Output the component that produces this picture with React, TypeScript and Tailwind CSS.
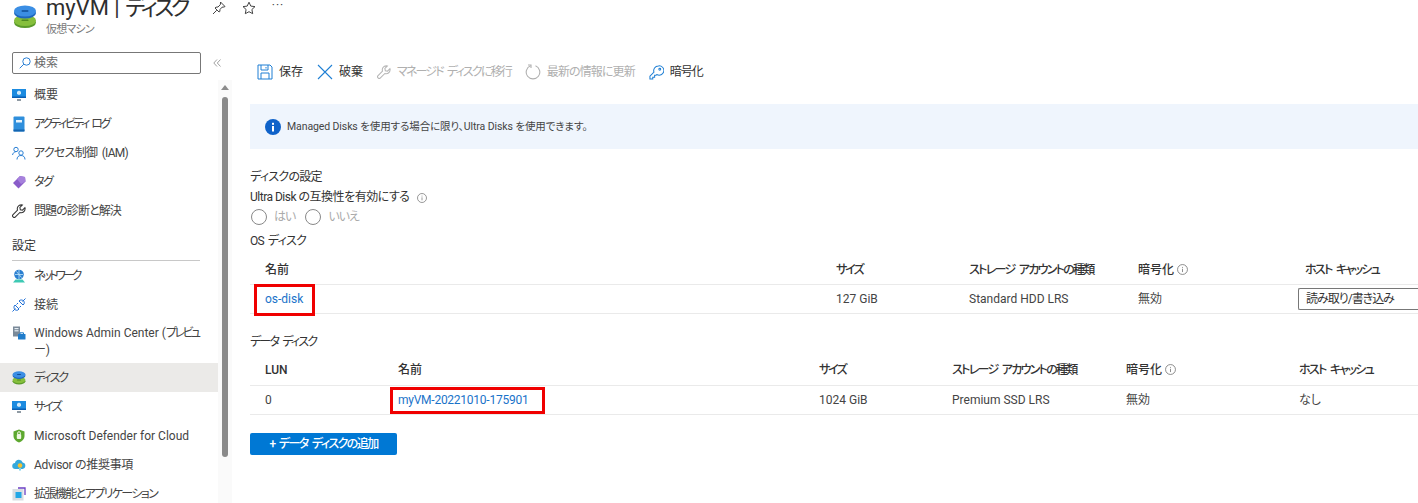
import React from "react";

const font = { fontFamily: 'Roboto,"Noto Sans CJK JP",sans-serif' };

const Monitor = () => (
  <svg width="14" height="14" viewBox="0 0 14 14">
    <rect x="0" y="1" width="14" height="9" fill="#1c8be0" />
    <rect x="0" y="8.500" width="14" height="1.500" fill="#0a5fb4" />
    <path d="M7 2.500l2 1.200v2.200L7 7 5 5.900V3.700z" fill="#cfeafc" />
    <rect x="5" y="11" width="4" height="2" fill="#8f9aa3" />
  </svg>
);
const Book = () => (
  <svg width="14" height="16" viewBox="0 0 14 16">
    <rect x="1.500" y="0.500" width="11" height="15" rx="1" fill="#2f8fdc" />
    <rect x="1.500" y="13.500" width="11" height="2" fill="#1465b0" />
    <rect x="4" y="4" width="6" height="2.500" fill="#e8f4fc" />
  </svg>
);
const People = () => (
  <svg width="14" height="14" viewBox="0 0 14 14" fill="none" stroke="#2a7fd4" strokeWidth="1">
    <circle cx="4" cy="3.500" r="2.200" />
    <path d="M0.500 9c.5-2 1.500-3 3-3" />
    <circle cx="9" cy="7" r="2.200" />
    <path d="M5 13.500c0-2.500 1.500-4 4-4s4 1.500 4 4" />
  </svg>
);
const Tag = () => (
  <svg width="14" height="14" viewBox="0 0 14 14">
    <path d="M8 1l5 1 .5 4.500L6.500 13.500 1 8z" fill="#8a5cc9" />
    <path d="M8 1l5 1 .5 4.500L9 9 5 4z" fill="#a681dc" />
  </svg>
);
const Wrench = ({ color = "#333", size = 14 }: { color?: string; size?: number }) => (
  <svg width={size} height={size} viewBox="0 0 16 16" fill="none" stroke={color} strokeWidth="1.200">
    <path d="M10.500 1a4.500 4.500 0 0 0-4.200 6L1.200 12.100a1.900 1.900 0 0 0 2.700 2.700L9 9.700A4.500 4.500 0 0 0 15 5.500c0-.5 0-.9-.2-1.300L12 7 9.500 6.500 9 4l2.800-2.800c-.4-.1-.9-.2-1.300-.2z" />
  </svg>
);
const Globe = () => (
  <svg width="14" height="14" viewBox="0 0 14 14">
    <circle cx="7" cy="5.500" r="4.800" fill="#2b7fd0" />
    <path d="M3 5.500h8M7 1v9M4.500 2.500c2 2 3 4 5 6" stroke="#bfe3f8" strokeWidth="0.800" fill="none" />
    <path d="M1 13.500l2.500-3h7l2.500 3z" fill="#3ec9b4" />
  </svg>
);
const Plug = () => (
  <svg width="14" height="14" viewBox="0 0 14 14" fill="none" stroke="#1f6fd6" strokeWidth="1">
    <path d="M0.500 13.500l3-3M10.500 3.500l3-3" />
    <path d="M3 7l4 4-1 1c-1 .5-2.500.3-3.200-.6C2 10.500 1.700 9 2.300 8zM7 3l4 4 1-1c.5-1 .3-2.500-.6-3.200C10.500 2 9 1.700 8 2.300z" />
    <path d="M4.500 6.500l1.500-1.500M7.500 9.500L9 8" />
  </svg>
);
const Admin = () => (
  <svg width="14" height="14" viewBox="0 0 14 14">
    <rect x="1" y="0.500" width="7" height="10" fill="#7b8a99" />
    <rect x="2.500" y="2" width="4" height="1.200" fill="#e6edf3" />
    <rect x="2.500" y="4.200" width="4" height="1.200" fill="#e6edf3" />
    <rect x="6" y="8" width="7.500" height="5.500" rx="0.500" fill="#1f7ccb" />
    <path d="M8 8V6.800h3.500V8" stroke="#1f7ccb" fill="none" />
  </svg>
);
const Disks = ({ size = 14 }: { size?: number }) => (
  <svg width={size} height={size} viewBox="0 0 24 24">
    <ellipse cx="12" cy="17.500" rx="11" ry="5.500" fill="#5a9a2a" />
    <ellipse cx="12" cy="15.500" rx="11" ry="5.500" fill="#86bf3c" />
    <rect x="8.500" y="14.600" width="7" height="1.500" rx="0.700" fill="#4e8a22" />
    <ellipse cx="12" cy="8" rx="11" ry="5.500" fill="#1d66bd" />
    <ellipse cx="12" cy="6" rx="11" ry="5.500" fill="#3b8ee4" />
    <rect x="8.500" y="5.300" width="7" height="1.500" rx="0.700" fill="#0f4e96" />
  </svg>
);
const Shield = () => (
  <svg width="14" height="14" viewBox="0 0 14 14">
    <path d="M7 0.500l5.500 2v4.500c0 3-2.500 5.500-5.500 6.500-3-1-5.500-3.500-5.500-6.500V2.500z" fill="#5da82f" />
    <rect x="4.800" y="5" width="4.400" height="5" rx="1" fill="#eef7e2" />
    <path d="M5.700 5V4a1.300 1.300 0 0 1 2.600 0v1" stroke="#eef7e2" fill="none" />
  </svg>
);
const Cloud = () => (
  <svg width="14" height="14" viewBox="0 0 14 14">
    <path d="M3.500 11a3 3 0 0 1-.5-6 4 4 0 0 1 7.700-.5A3.300 3.300 0 0 1 10.500 11z" fill="#35a9dc" />
    <circle cx="8" cy="7.500" r="2.300" fill="#f6c22f" />
    <rect x="7" y="10" width="2" height="2.500" fill="#7fd3ee" />
  </svg>
);
const Ext = () => (
  <svg width="14" height="14" viewBox="0 0 14 14">
    <rect x="0.500" y="2" width="11" height="11.500" fill="#d8dde2" />
    <rect x="3.500" y="5" width="6" height="6" fill="#22a7e6" />
    <path d="M6 1h7v7" stroke="#6b3fc4" strokeWidth="1.300" fill="none" />
  </svg>
);

const Info = ({ size = 11 }: { size?: number }) => (
  <svg width={size} height={size} viewBox="0 0 12 12" fill="none" stroke="#666" strokeWidth="0.800">
    <circle cx="6" cy="6" r="5.400" />
    <path d="M6 5.200v3.600M6 3.200v1" />
  </svg>
);

function NavItem({ icon, label, active, tc = "" }: { icon: React.ReactNode; label: string; active?: boolean; tc?: string }) {
  return (
    <div className={`flex h-[29px] items-center pl-3 ${active ? "bg-[#ebeae8]" : ""}`}>
      <span className="mr-2 flex w-[14px] justify-center">{icon}</span>
      <span className={`text-[12px] text-[#444] ${tc}`}>{label}</span>
    </div>
  );
}

function Tool({ icon, label, off, tc = "" }: { icon: React.ReactNode; label: string; off?: boolean; tc?: string }) {
  return (
    <div className="flex items-center gap-[6px]">
      {icon}
      <span className={`text-[12px] ${tc} ${off ? "text-[#b0b0b0]" : "text-[#333]"}`}>{label}</span>
    </div>
  );
}

function Marked({ children, cls }: { children: React.ReactNode; cls: string }) {
  return (
    <span className="relative inline-block">
      <span className={`absolute border-[3px] border-[#f00000] ${cls}`} />
      {children}
    </span>
  );
}

export default function App() {
  return (
    <div className="h-[503px] w-[1418px] overflow-hidden bg-white text-[#333] [font-feature-settings:'palt']" style={font}>
      {/* header */}
      <div className="flex h-[44px] items-start pl-[13px]">
        <div className="mt-[5px] mr-[9px]">
          <Disks size={24} />
        </div>
        <div>
          <div className="mt-[-8px] flex items-center">
            <span className="text-[22px] leading-[32px] text-[#2e2e2e]">
              myVM | <span className="tracking-[-3.500px]">ディスク</span>
            </span>
            <svg className="ml-[25px]" width="14" height="14" viewBox="0 0 14 14" fill="none" stroke="#444" strokeWidth="1">
              <path d="M8.500 1l4.500 4.500-1 .5-2 .2-2 2.300-.2 2L7 11 3 7l1-.8 2-.2L8.300 3.700l.2-1.700zM4.800 9.200L1 13" />
            </svg>
            <svg className="ml-[16px]" width="14" height="14" viewBox="0 0 14 14" fill="none" stroke="#444" strokeWidth="1">
              <path d="M7 1.200l1.800 3.900 4.200.5-3.100 2.900.8 4.200L7 10.700l-3.700 2 .8-4.200L1 5.600l4.200-.5z" />
            </svg>
            <span className="mb-[7px] ml-[16px] text-[12px] tracking-[1px] text-[#444]">···</span>
          </div>
          <div className="mt-[-1px] text-[11px] leading-[14px] tracking-[-0.800px] text-[#777]">仮想マシン</div>
        </div>
      </div>

      <div className="flex h-[459px]">
        {/* sidebar */}
        <div className="relative h-full w-[232px] shrink-0 overflow-hidden">
          <div className="flex items-center pt-[8px] pl-3">
            <div className="flex h-[22px] w-[189px] items-center rounded-[2px] border border-[#777] pl-[6px]">
              <svg width="12" height="12" viewBox="0 0 12 12" fill="none" stroke="#2a7fd4" strokeWidth="1">
                <circle cx="7.500" cy="4.500" r="3.700" />
                <path d="M4.800 7.200L.7 11.300" />
              </svg>
              <span className="ml-[3px] text-[12px] text-[#666]">検索</span>
            </div>
            <svg className="ml-[12px]" width="8" height="8" viewBox="0 0 8 8" fill="none" stroke="#888" strokeWidth="0.800">
              <path d="M4 .5L.8 4 4 7.500M7.500 .5L4.300 4l3.200 3.500" />
            </svg>
          </div>
          <div className="w-[218px] pt-[6px]">
            <NavItem icon={<Monitor />} label="概要" />
            <NavItem icon={<Book />} label="アクティビティ ログ" tc="tracking-[-2.500px] [word-spacing:3px]" />
            <NavItem icon={<People />} label="アクセス制御 (IAM)" tc="tracking-[-0.700px] [word-spacing:2px]" />
            <NavItem icon={<Tag />} label="タグ" tc="tracking-[-1.500px]" />
            <NavItem icon={<Wrench />} label="問題の診断と解決" tc="tracking-[-0.900px]" />
            <div className="mt-[12px] pl-3 text-[12px] leading-[18px] text-[#333]">設定</div>
            <div className="mt-[5px] ml-3 w-[188px] border-t border-[#c8c8c8]" />
            <NavItem icon={<Globe />} label="ネットワーク" tc="tracking-[-3px]" />
            <NavItem icon={<Plug />} label="接続" />
            <div className="flex h-[44px] items-start pt-[6px] pl-3">
              <span className="mt-[1px] mr-2 flex w-[14px] justify-center"><Admin /></span>
              <span className="text-[12px] leading-[17px] text-[#444]">
                Windows Admin Center (<span className="tracking-[-2.500px]">プレビュ</span>
                <br />
                ー)
              </span>
            </div>
            <NavItem active icon={<Disks />} label="ディスク" tc="tracking-[-2px]" />
            <NavItem icon={<Monitor />} label="サイズ" tc="tracking-[-2px]" />
            <NavItem icon={<Shield />} label="Microsoft Defender for Cloud" />
            <NavItem icon={<Cloud />} label="Advisor の推奨事項" tc="tracking-[-0.300px]" />
            <NavItem icon={<Ext />} label="拡張機能とアプリケーション" tc="tracking-[-1.600px]" />
          </div>
          {/* scrollbar */}
          <div className="absolute top-[36px] left-[218px] h-[423px] w-[14px] bg-[#fafafa]">
            <div className="mx-auto mt-[5px] h-0 w-0 border-x-[4px] border-b-[5px] border-x-transparent border-b-[#8a8a8a]" />
            <div className="mx-auto mt-[7px] h-[360px] w-[6px] rounded-[3px] bg-[#8a8a8a]" />
          </div>
        </div>

        {/* main */}
        <div className="min-w-0 flex-1 pl-[18px]">
          <div className="flex h-[60px] items-start gap-[14px] pt-[19px] pl-[7px]">
            <Tool
              label="保存"
              icon={
                <svg width="16" height="16" viewBox="0 0 16 16" fill="none" stroke="#1f7fd4" strokeWidth="1">
                  <path d="M1 1h12l2 2v12H1z" />
                  <path d="M4 1v5h7V1M4 15v-6h8v6M9 3v1.500" />
                </svg>
              }
            />
            <Tool
              label="破棄"
              icon={
                <svg width="16" height="16" viewBox="0 0 16 16" fill="none" stroke="#1f7fd4" strokeWidth="1.100">
                  <path d="M1 1l14 14M15 1L1 15" />
                </svg>
              }
            />
            <Tool off label="マネージド ディスクに移行" tc="tracking-[-1.850px] [word-spacing:3px]" icon={<Wrench color="#b5b5b5" />} />
            <Tool
              off
              label="最新の情報に更新"
              tc="tracking-[-0.900px]"
              icon={
                <svg width="16" height="16" viewBox="0 0 16 16" fill="none" stroke="#b0b0b0" strokeWidth="1.100">
                  <path d="M5.500 1.800A6.800 6.800 0 1 0 10.500 1.800" />
                  <path d="M3 1h3v3" />
                </svg>
              }
            />
            <Tool
              label="暗号化"
              tc="tracking-[-1px]"
              icon={
                <svg width="15" height="15" viewBox="0 0 16 16" fill="none" stroke="#1f7fd4" strokeWidth="1.100">
                  <path d="M10 1a5 5 0 0 0-4.700 6.700L1 12v3h3v-2h2v-2h1.500l.8-.8A5 5 0 1 0 10 1z" />
                  <circle cx="11.500" cy="4.500" r="1" />
                </svg>
              }
            />
          </div>

          <div className="flex h-[45px] items-center bg-[#eff5fd] pl-[15px]">
            <svg width="16" height="16" viewBox="0 0 16 16">
              <circle cx="8" cy="8" r="8" fill="#0f62c9" />
              <rect x="7" y="7" width="2" height="5.500" fill="#fff" />
              <rect x="7" y="3.800" width="2" height="2" fill="#fff" />
            </svg>
            <span className="ml-[6px] text-[10.500px] tracking-[-0.100px] text-[#444]">Managed Disks を使用する場合に限り、Ultra Disks を使用できます。</span>
          </div>

          <div className="mt-[20px] text-[12px] leading-[17px] tracking-[-0.700px] text-[#333]">ディスクの設定</div>
          <div className="mt-[3px] flex items-center text-[12px] leading-[17px] tracking-[-0.500px] text-[#333]">
            Ultra Disk の互換性を有効にする
            <span className="ml-[8px] flex"><Info size={10} /></span>
          </div>
          <div className="mt-[2px] flex h-[18px] items-center pl-[1px] text-[12px] tracking-[-1px] text-[#aaa]">
            <span className="mr-[7px] h-[16px] w-[16px] rounded-full border border-[#888]" />
            <span>はい</span>
            <span className="mr-[7px] ml-[10px] h-[16px] w-[16px] rounded-full border border-[#888]" />
            <span>いいえ</span>
          </div>
          <div className="mt-[7px] text-[12px] leading-[17px] tracking-[-0.800px] text-[#333] [word-spacing:2px]">OS ディスク</div>

          {/* OS table */}
          <div className="grid h-[35px] grid-cols-[571px_133px_169px_167px_1fr] items-center border-b border-[#eaeaea] pt-[5px] pl-[15px] text-[12px] font-medium text-[#333]">
            <span>名前</span>
            <span className="tracking-[-2px]">サイズ</span>
            <span className="tracking-[-1.700px] [word-spacing:3px]">ストレージ アカウントの種類</span>
            <span className="flex items-center gap-[3px]">暗号化 <Info /></span>
            <span className="tracking-[-1.700px] [word-spacing:3px]">ホスト キャッシュ</span>
          </div>
          <div className="grid h-[29px] grid-cols-[571px_133px_169px_160px_1fr] items-center border-b border-[#eaeaea] pl-[15px] text-[12px] text-[#444]">
            <span className="text-[#1a73c9]">
              <Marked cls="top-[-6px] -right-[12px] bottom-[-8px] -left-[11px]">os-disk</Marked>
            </span>
            <span>127 GiB</span>
            <span>Standard HDD LRS</span>
            <span>無効</span>
            <span className="flex h-[22px] items-center rounded-l-[2px] border border-r-0 border-[#777] pl-[7px] tracking-[-1px] text-[#333]">読み取り/書き込み</span>
          </div>

          <div className="mt-[20px] text-[12px] leading-[17px] tracking-[-1.800px] text-[#333] [word-spacing:3px]">データ ディスク</div>

          {/* data table */}
          <div className="grid h-[35px] grid-cols-[133px_421px_133px_174px_173px_1fr] items-center border-b border-[#eaeaea] pt-[3px] pl-[15px] text-[12px] font-medium text-[#333]">
            <span>LUN</span>
            <span>名前</span>
            <span className="tracking-[-2px]">サイズ</span>
            <span className="tracking-[-1.700px] [word-spacing:3px]">ストレージ アカウントの種類</span>
            <span className="flex items-center gap-[3px]">暗号化 <Info /></span>
            <span className="tracking-[-1.700px] [word-spacing:3px]">ホスト キャッシュ</span>
          </div>
          <div className="grid h-[29px] grid-cols-[133px_421px_133px_174px_173px_1fr] items-center border-b border-[#eaeaea] pl-[15px] text-[12px] text-[#444]">
            <span>0</span>
            <span className="tracking-[-0.250px] text-[#1a73c9]">
              <Marked cls="top-[-4px] -right-[17px] bottom-[-5px] -left-[8px]">myVM-20221010-175901</Marked>
            </span>
            <span>1024 GiB</span>
            <span>Premium SSD LRS</span>
            <span>無効</span>
            <span>なし</span>
          </div>

          <div className="mt-[18px] flex h-[22px] w-[147px] items-center justify-center rounded-[2px] bg-[#0078d4] text-[12px] font-medium tracking-[-1.600px] text-white [word-spacing:3px]">
            + データ ディスクの追加
          </div>
        </div>
      </div>
    </div>
  );
}
